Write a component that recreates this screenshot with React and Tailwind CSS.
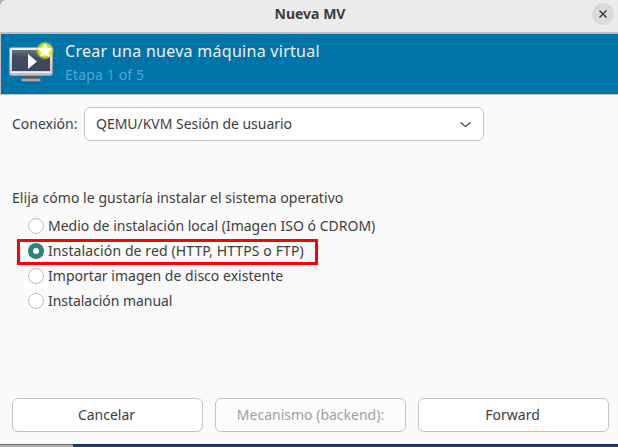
import React from "react";

const options = [
  { label: "Medio de instalación local (Imagen ISO ó CDROM)", tracking: "tracking-[0.01px]" },
  { label: "Instalación de red (HTTP, HTTPS o FTP)", tracking: "tracking-[0.11px]", checked: true },
  { label: "Importar imagen de disco existente", tracking: "tracking-[0.03px]" },
  { label: "Instalación manual", tracking: "tracking-[-0.05px]" },
];

function MonitorIcon() {
  return (
    <svg width="48" height="44" viewBox="0 0 48 44" className="shrink-0">
      <defs>
        <linearGradient id="frame" x1="0" y1="0" x2="0" y2="1">
          <stop offset="0" stopColor="#f4f4f4" />
          <stop offset="1" stopColor="#bdbdbd" />
        </linearGradient>
        <linearGradient id="screen" x1="0" y1="0" x2="0" y2="1">
          <stop offset="0" stopColor="#6b7280" />
          <stop offset="0.35" stopColor="#414c61" />
          <stop offset="1" stopColor="#3d485e" />
        </linearGradient>
        <radialGradient id="glow">
          <stop offset="0.45" stopColor="#eff000" />
          <stop offset="0.72" stopColor="#dbe32a" stopOpacity="0.85" />
          <stop offset="1" stopColor="#b5cf3a" stopOpacity="0" />
        </radialGradient>
      </defs>
      <path d="M17 34h11v4H17z" fill="#50585b" />
      <rect x="12.5" y="37.5" width="19" height="3" rx="0.5" fill="#aaaaaa" stroke="#6c7172" />
      <rect x="0.5" y="6.5" width="43" height="28" rx="2" fill="url(#frame)" stroke="#9aa0a0" />
      <rect x="3" y="9" width="38" height="21" fill="url(#screen)" />
      <path d="M2 30.5h40v1.5H2z" fill="#efefef" />
      <path d="M19 13v15l9-7.5z" fill="#fff" />
      <circle cx="36" cy="9.5" r="9.5" fill="url(#glow)" />
      <path d="M36 3.5l1.800 4 4.200.4-3.200 2.900.9 4.200-3.700-2.100-3.700 2.100.9-4.200-3.200-2.900 4.200-.4z" fill="#fff" stroke="#fff" strokeWidth="1.4" strokeLinejoin="round" />
    </svg>
  );
}

function Radio({ checked }) {
  return checked ? (
    <span className="flex h-4 w-4 shrink-0 items-center justify-center rounded-full bg-[#308280]">
      <span className="h-[6px] w-[6px] rounded-full bg-white" />
    </span>
  ) : (
    <span className="h-4 w-4 shrink-0 rounded-full border border-[#bebebe] bg-white" />
  );
}

export default function App() {
  return (
    <div className="flex h-[447px] w-[618px] flex-col overflow-hidden bg-[#fafafa] font-['Noto_Sans',sans-serif] text-[14px] leading-5 whitespace-nowrap text-[#3d3d3d]">
      <div className="flex h-[34px] shrink-0 bg-[#a9a9a9]">
        <header className="flex flex-1 items-center rounded-tl-[6px] border-b-2 border-[#bfbfbf] bg-[#ebebeb] pr-1 pb-1">
          <span className="w-[26px]" />
          <h1 className="flex-1 text-center text-[14px] font-bold"><span className="pl-[2px]">Nueva MV</span></h1>
          <button className="flex h-[22px] w-[22px] items-center justify-center rounded-full bg-[#dadada]">
            <svg width="10" height="10" viewBox="0 0 10 10" stroke="#3d3d3d" strokeWidth="1.5">
              <path d="M1.5 1.5l7 7M8.5 1.5l-7 7" />
            </svg>
          </button>
        </header>
      </div>
      <section className="flex h-[61px] shrink-0 border-b border-l border-b-[#b9bfc2] border-l-[#bfbfbf] bg-[#0073a9] pt-[7px] pl-2">
        <MonitorIcon />
        <div className="pl-2">
          <p className="text-[16px] leading-5 tracking-[0.28px] text-[#f2f2f2]">Crear una nueva máquina virtual</p>
          <p className="pt-1 text-[14px] leading-5 tracking-[0.15px] text-[#4da5d6]">Etapa 1 of 5</p>
        </div>
      </section>
      <main className="flex flex-1 flex-col pr-[9px] pl-3">
        <div className="mt-3 flex items-center">
          <span className="w-[72px]">Conexión:</span>
          <div className="flex h-[34px] w-[400px] items-center justify-between rounded-[6px] border border-[#c4c4c4] bg-white pr-3 pl-[11px]">
            <span className="tracking-[-0.03px]">QEMU/KVM Sesión de usuario</span>
            <svg width="11" height="7" viewBox="0 0 11 7" fill="none" stroke="#3d3d3d" strokeWidth="1.2">
              <path d="M.5 1.500l5 4L10.500 1.500" />
            </svg>
          </div>
        </div>
        <p className="mt-[47px] tracking-[0.055px]"><span>Elija cómo le gustaría instalar el sistema operativo</span></p>
        <div className="relative mt-[5px] flex flex-col pl-4">
          {options.map((o) => (
            <label key={o.label} className="flex h-[25px] items-center gap-1">
              <Radio checked={o.checked} />
              <span className={o.tracking}>{o.label}</span>
            </label>
          ))}
          <div className="absolute top-[26px] left-[5px] h-[26px] w-[301px] border-[3px] border-[#fb0007]" />
        </div>
        <div className="mt-auto mb-3 grid grid-cols-3 gap-3">
          <button className="h-[34px] rounded-[6px] border border-[#c4c4c4] bg-white pr-[2px]"><span>Cancelar</span></button>
          <button className="h-[34px] rounded-[6px] border border-[#c4c4c4] bg-[#fcfcfc] text-[#a0a0a0]"><span>Mecanismo (backend):</span></button>
          <button className="h-[34px] rounded-[6px] border border-[#c4c4c4] bg-white pr-[2px]"><span>Forward</span></button>
        </div>
      </main>
      <footer className="flex h-[3px] shrink-0">
        <div className="w-[73px] border-t border-[#6f6f6f] bg-[#b4b4b4]" />
        <div className="flex-1 border-t border-[#182750] bg-[#243a76]" />
      </footer>
    </div>
  );
}
